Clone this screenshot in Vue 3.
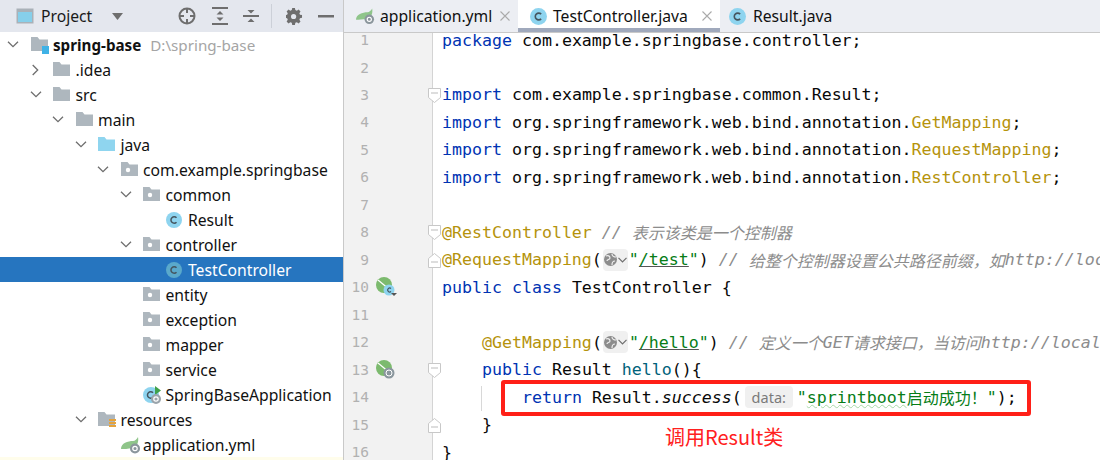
<script setup>
const tree = [
  { l: 0, ch: 'd', icon: 'root', name: 'spring-base', bold: true, hint: 'D:\\spring-base' },
  { l: 1, ch: 'r', icon: 'folder', name: '.idea' },
  { l: 1, ch: 'd', icon: 'folder', name: 'src' },
  { l: 2, ch: 'd', icon: 'folder', name: 'main' },
  { l: 3, ch: 'd', icon: 'java', name: 'java' },
  { l: 4, ch: 'd', icon: 'pkg', name: 'com.example.springbase' },
  { l: 5, ch: 'd', icon: 'pkg', name: 'common' },
  { l: 6, icon: 'class', name: 'Result' },
  { l: 5, ch: 'd', icon: 'pkg', name: 'controller' },
  { l: 6, icon: 'class', name: 'TestController', sel: true },
  { l: 5, icon: 'pkg', name: 'entity' },
  { l: 5, icon: 'pkg', name: 'exception' },
  { l: 5, icon: 'pkg', name: 'mapper' },
  { l: 5, icon: 'pkg', name: 'service' },
  { l: 5, icon: 'app', name: 'SpringBaseApplication' },
  { l: 3, ch: 'd', icon: 'res', name: 'resources' },
  { l: 4, icon: 'yml', name: 'application.yml' },
]
const pkg = 'org.springframework.web.bind.annotation.'
const lines = [
  { t: [['kw', 'package'], ['', ' com.example.springbase.controller;']] },
  { t: [] },
  { fold: 'down', t: [['kw', 'import'], ['', ' com.example.springbase.common.Result;']] },
  { t: [['kw', 'import'], ['', ' ' + pkg], ['ann', 'GetMapping'], ['', ';']] },
  { t: [['kw', 'import'], ['', ' ' + pkg], ['ann', 'RequestMapping'], ['', ';']] },
  { t: [['kw', 'import'], ['', ' ' + pkg], ['ann', 'RestController'], ['', ';']] },
  { t: [] },
  { fold: 'down', t: [['ann', '@RestController'], ['', ' '], ['cm', '// '], ['cm cjk', '表示该类是一个控制器']] },
  { fold: 'up', t: [['ann', '@RequestMapping'], ['', '('], ['globe', ''], ['str', '"'], ['str ul', '/test'], ['str', '"'], ['', ') '], ['cm', '// '], ['cm cjk', '给整个控制器设置公共路径前缀，如'], ['cm', 'http://localhost:8080/test']] },
  { mark: 'bean', t: [['kw', 'public class'], ['', ' TestController {']] },
  { t: [] },
  { t: [['', '    '], ['ann', '@GetMapping'], ['', '('], ['globe', ''], ['str', '"'], ['str ul', '/hello'], ['str', '"'], ['', ') '], ['cm', '// '], ['cm cjk', '定义一个'], ['cm', 'GET'], ['cm cjk', '请求接口，当访问'], ['cm', 'http://localhost:8080/test/hello']] },
  { mark: 'web', fold: 'down', t: [['', '    '], ['kw', 'public'], ['', ' Result '], ['fn', 'hello'], ['', '(){']] },
  { guide: true, t: [['', '        '], ['kw', 'return'], ['', ' Result.'], ['it', 'success'], ['', '('], ['hint', 'data:'], ['str', '"'], ['str wavy', 'sprintboot'], ['str cjk', '启动成功！'], ['str', '"'], ['', ');']] },
  { fold: 'up', t: [['', '    }']] },
  { t: [['', '}']] },
]
</script>

<template>
  <div class="ide">
    <aside class="side">
      <header class="side-head">
        <svg class="proj" width="18" height="18" viewBox="0 0 18 18"><rect x="0.5" y="1.5" width="17" height="15" fill="#a9b1b8"/><rect x="2" y="5" width="14" height="10" fill="#86cfea"/></svg>
        <span class="proj-name">Project</span>
        <svg class="drop" width="11" height="7" viewBox="0 0 11 7"><path d="M0 0h11L5.500 7z" fill="#6e6e6e"/></svg>
        <span class="grow"></span>
        <svg class="tool" width="20" height="20" viewBox="0 0 20 20" fill="none" stroke="#6e6e6e" stroke-width="2"><circle cx="10" cy="10" r="7.500"/><path d="M10 2v5M10 13v5M2 10h5M13 10h5"/></svg>
        <svg class="tool" width="16" height="18" viewBox="0 0 16 18" fill="#6e6e6e"><path d="M0 0h16v2H0zM0 16h16v2H0zM8 4l3.500 3.500h-7zM8 14l-3.500-3.500h7z"/></svg>
        <svg class="tool" width="16" height="18" viewBox="0 0 16 18" fill="#6e6e6e"><path d="M0 8h16v2H0zM8 6.500l-3.500-3.500h7zM8 11.500l3.500 3.500h-7z"/></svg>
        <span class="sep"></span>
        <svg class="tool" width="17" height="17" viewBox="0 0 17 17"><path d="M7 0h3l.5 2.300 1.700.7 2-1.300 2.100 2.100-1.300 2 .7 1.700 2.300.5v3l-2.300.5-.7 1.700 1.300 2-2.100 2.100-2-1.300-1.700.7L10 19H7l-.5-2.300-1.700-.7-2 1.300L.700 15.200l1.300-2-.7-1.700L-1 11V8l2.300-.5.700-1.700-1.300-2L2.800 1.700l2 1.300 1.700-.7z" transform="scale(.89)" fill="#6e6e6e"/><circle cx="7.600" cy="8.500" r="2.600" fill="#e4e7ee"/></svg>
        <svg class="tool last" width="16" height="3" viewBox="0 0 16 3"><rect width="16" height="2.500" fill="#6e6e6e"/></svg>
      </header>
      <ul class="tree">
        <li v-for="n in tree" :key="n.name" class="row" :class="{ sel: n.sel }" :style="{ paddingLeft: n.l * 22.5 + 4 + 'px' }">
          <span class="chev">
            <svg v-if="n.ch === 'd'" width="12" height="7" viewBox="0 0 12 7" fill="none" stroke="#6e6e6e" stroke-width="1.300"><path d="M1 .7l5 5 5-5"/></svg>
            <svg v-else-if="n.ch === 'r'" width="7" height="12" viewBox="0 0 7 12" fill="none" stroke="#6e6e6e" stroke-width="1.300"><path d="M.7 1l5 5-5 5"/></svg>
          </span>
          <span class="ico">
            <svg width="20" height="18" viewBox="0 0 20 18">
              <template v-if="n.icon === 'class'">
                <circle cx="8" cy="9" r="8" :fill="n.sel ? '#5aa9cb' : '#8ed4ef'"/>
                <path d="M10.500 6.800A3.200 3.200 0 1 0 10.500 11.200" fill="none" stroke="#45555f" stroke-width="1.500"/>
              </template>
              <template v-else-if="n.icon === 'app'">
                <circle cx="8" cy="9" r="8" fill="#8ed4ef"/>
                <path d="M10 6.800A3.200 3.200 0 1 0 10 11.200" fill="none" stroke="#45555f" stroke-width="1.500"/>
                <path d="M12 0l6 4.500-6 4.500z" fill="#3fa14a"/>
                <circle cx="13" cy="13" r="5" fill="#9aa4ab"/><circle cx="13" cy="13" r="2.200" fill="none" stroke="#fff" stroke-width="1.200"/>
              </template>
              <template v-else-if="n.icon === 'yml'">
                <path d="M0 13C0 7 7 5 12 5c2 0 4-2 5-4 1 5-1 10-6 11-4 1-8 1-11 1z" fill="#8fc58a"/>
                <circle cx="14" cy="12.500" r="5" fill="#8b969c"/><circle cx="14" cy="12.500" r="2.200" fill="none" stroke="#fff" stroke-width="1.200"/>
              </template>
              <template v-else>
                <path d="M0 1h6.500l2 2.500H17V15H0z" :fill="n.icon === 'java' ? '#8fd5ef' : '#aeb7be'"/>
                <circle v-if="n.icon === 'pkg'" cx="7" cy="9" r="2.200" fill="#fff"/>
                <g v-if="n.icon === 'root'"><rect x="11" y="10" width="7" height="8" fill="#3fb2e6"/></g>
                <g v-if="n.icon === 'res'" fill="#e5a33d"><rect x="11" y="8" width="7" height="2"/><rect x="11" y="11" width="7" height="2"/><rect x="11" y="14" width="7" height="2"/></g>
              </template>
            </svg>
          </span>
          <span class="name" :class="{ bold: n.bold }">{{ n.name }}</span>
          <span v-if="n.hint" class="path">{{ n.hint }}</span>
        </li>
        <li class="row tail"></li>
      </ul>
    </aside>
    <main class="main">
      <nav class="tabs">
        <div class="tab one">
          <svg width="19" height="18" viewBox="0 0 20 18"><path d="M0 13C0 7 7 5 12 5c2 0 4-2 5-4 1 5-1 10-6 11-4 1-8 1-11 1z" fill="#8fc58a"/><circle cx="14" cy="12.500" r="5" fill="#8b969c"/><circle cx="14" cy="12.500" r="2.200" fill="none" stroke="#fff" stroke-width="1.200"/></svg>
          <span class="tname">application.yml</span>
          <svg class="x" width="10" height="10" viewBox="0 0 10 10" fill="none" stroke="#aaa" stroke-width="1.100"><path d="M.5 .5l9 9M9.500 .5l-9 9"/></svg>
        </div>
        <div class="tab two active">
          <svg width="17" height="17" viewBox="0 0 16 16"><circle cx="8" cy="8" r="8" fill="#8ed4ef"/><path d="M10.500 5.800A3.200 3.200 0 1 0 10.500 10.200" fill="none" stroke="#45555f" stroke-width="1.500"/></svg>
          <span class="tname">TestController.java</span>
          <svg class="x" width="10" height="10" viewBox="0 0 10 10" fill="none" stroke="#aaa" stroke-width="1.100"><path d="M.5 .5l9 9M9.500 .5l-9 9"/></svg>
        </div>
        <div class="tab three">
          <svg width="17" height="17" viewBox="0 0 16 16"><circle cx="8" cy="8" r="8" fill="#8ed4ef"/><path d="M10.500 5.800A3.200 3.200 0 1 0 10.500 10.200" fill="none" stroke="#45555f" stroke-width="1.500"/></svg>
          <span class="tname">Result.java</span>
        </div>
      </nav>
      <section class="editor">
        <div class="lines">
          <div v-for="(ln, i) in lines" :key="i" class="line">
            <div class="gutter">
              <span class="num">{{ i + 1 }}</span>
              <span class="mark">
                <svg v-if="ln.mark" width="21" height="20" viewBox="0 0 21 20">
                  <circle cx="8" cy="8" r="8" fill="#7cba6e"/><path d="M2 3l12 10" stroke="#fff" stroke-width="1.200"/>
                  <circle cx="13" cy="13" r="5.500" :fill="ln.mark === 'bean' ? '#8ed4ef' : '#8a969d'"/>
                  <path v-if="ln.mark === 'bean'" d="M15 11.500A2 2 0 1 0 15 14.500" fill="none" stroke="#45555f" stroke-width="1.200"/>
                  <circle v-else cx="13" cy="13" r="3" fill="none" stroke="#fff" stroke-width="1"/>
                  <path v-if="ln.mark === 'bean'" d="M15 16h6l-3 3z" fill="#555"/>
                </svg>
              </span>
              <span class="foldbox">
                <svg v-if="ln.fold" width="13" height="15" viewBox="0 0 13 15" fill="#fff" stroke="#c8c8c8">
                  <path v-if="ln.fold === 'up'" d="M.5 14.500V5.500L6.500.5l6 5v9z"/>
                  <path v-else d="M.5 .5h12v9l-6 5-6-5z"/>
                  <path v-if="ln.fold === 'up'" d="M3 9h7" stroke="#bbb"/>
                  <path v-else d="M3 5h7" stroke="#bbb"/>
                </svg>
              </span>
            </div>
            <div class="code">
              <span v-if="ln.guide" class="guide"></span>
              <template v-for="(tk, j) in ln.t" :key="j">
                <span v-if="tk[0] === 'globe'" class="pill globe">
                  <svg width="13" height="13" viewBox="0 0 13 13"><circle cx="6.500" cy="6.500" r="6.500" fill="#8c8c8c"/><path d="M2 3c2-1 4 0 4 2s-3 1-3 3M8 1c0 2 2 3 4 3M8 12c0-2 1-4 3-4" fill="none" stroke="#eee" stroke-width="1.200"/></svg>
                  <svg width="9" height="6" viewBox="0 0 9 6" fill="none" stroke="#6e6e6e" stroke-width="1.200"><path d="M.5 .8l4 4 4-4"/></svg>
                </span>
                <span v-else-if="tk[0] === 'hint'" class="pill data">{{ tk[1] }}</span>
                <span v-else :class="tk[0]">{{ tk[1] }}</span>
              </template>
            </div>
          </div>
        </div>
        <div class="redbox"></div>
        <div class="redlabel">调用Result类</div>
      </section>
    </main>
  </div>
</template>

<style scoped>
.ide { display: flex; width: 1100px; height: 460px; overflow: hidden; background: #fff; color: #000; }
.side { width: 343px; flex: none; border-right: 1px solid #c9c9c9; overflow: hidden; font-family: "Noto Sans", sans-serif; font-size: 15.7px; }
.side-head { height: 32px; display: flex; align-items: center; background: #e4e7ee; padding-left: 16px; }
.proj-name { margin-left: 7px; width: 71px; color: #1a1a1a; }
.grow { flex: 1; }
.tool { margin-left: 15px; flex: none; }
.last { margin-right: 9px; }
.sep { width: 1px; height: 24px; background: #ccd0d8; margin: 0 -1px 0 12px; }
.tree { list-style: none; margin: 0; padding: 0; }
.row { height: 25px; display: flex; align-items: center; white-space: nowrap; color: #111; box-sizing: border-box; }
.row.sel { background: #2675bf; color: #fff; }
.row.tail { background: #fffdeb; }
.chev { width: 18px; flex: none; display: flex; justify-content: center; align-items: center; margin-right: 8.5px; }
.ico { width: 22.5px; flex: none; display: flex; align-items: center; }
.bold { font-weight: 700; font-size: 15.2px; }
.path { margin-left: 9px; color: #a5a5a5; font-size: 15.2px; }
.main { flex: 1; min-width: 0; display: flex; flex-direction: column; }
.tabs { position: relative; z-index: 1; height: 32px; flex: none; display: flex; background: #eceef3; border-bottom: 1px solid #c9c9c9; box-sizing: content-box; font-family: "Noto Sans", sans-serif; font-size: 15.7px; color: #111; }
.tab { display: flex; align-items: center; box-sizing: border-box; padding-left: 12px; }
.tname { margin-left: 6px; }
.one .tname { margin-left: 5px; }
.one { width: 174px; }
.two { width: 202px; }
.three { padding-left: 9px; }
.three .tname { margin-left: 7px; }
.active { background: #fff; border-bottom: 4px solid #a0a9bc; padding-top: 4px; }
.x { margin-left: auto; margin-right: 8px; flex: none; }
.editor { position: relative; flex: 1; min-height: 0; font-family: "DejaVu Sans Mono", monospace; font-size: 16.6px; }
.lines { margin-top: -6.7px; }
.line { display: flex; height: 27.47px; }
.gutter { width: 89px; flex: none; display: flex; align-items: center; background: #f2f2f2; box-sizing: border-box; border-right: 1px solid #d4d4d4; }
.num { width: 25px; text-align: right; color: #b1b1b1; font-size: 14.5px; flex: none; }
.mark { width: 58px; padding-left: 7px; box-sizing: border-box; display: flex; align-items: center; flex: none; }
.foldbox { width: 6px; display: flex; align-items: center; position: relative; }
.foldbox svg { position: absolute; left: 1px; top: -7px; }
.code { position: relative; padding-left: 9px; display: flex; align-items: center; white-space: pre; flex: 1; min-width: 0; color: #080808; }
.guide { position: absolute; left: 48px; top: 3px; bottom: 0; width: 1px; background: #d8d8d8; }
.kw { color: #0033b3; }
.ann { color: #b5930c; }
.str { color: #067d17; }
.cm { color: #8c8c8c; font-style: italic; }
.fn { color: #00627a; }
.it { font-style: italic; }
.cjk { font-family: "Noto Sans CJK SC", sans-serif; font-size: 16px; }
.ul { text-decoration: underline; text-decoration-color: #555; }
.wavy { text-decoration: underline wavy #a8d8a8 1px; }
.pill { background: #f0f0f0; border-radius: 4px; display: inline-flex; align-items: center; flex: none; height: 22px; }
.globe { width: 25px; gap: 1px; padding-left: 1px; box-sizing: border-box; margin: 0 1px 0 1px; }
.data { font-family: "Noto Sans", sans-serif; font-size: 14.5px; color: #7a7a7a; width: 48px; justify-content: center; margin: 0 4px 0 3px; }
.redbox { position: absolute; left: 157px; top: 347px; width: 530px; height: 36px; box-sizing: border-box; border: 4px solid #ff2018; border-radius: 3px; }
.redlabel { position: absolute; left: 321px; top: 390px; color: #ff2020; font-family: "Noto Sans CJK SC", sans-serif; font-size: 20px; line-height: 28px; }
</style>
